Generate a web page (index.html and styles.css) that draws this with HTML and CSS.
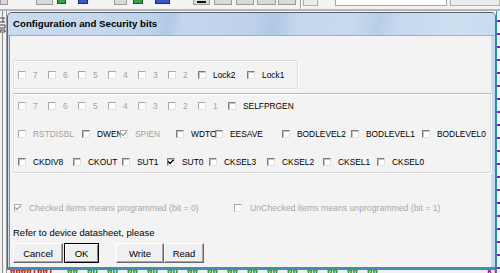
FILE: index.html
```html
<!DOCTYPE html>
<html>
<head>
<meta charset="utf-8">
<title>Configuration and Security bits</title>
<link rel="stylesheet" href="styles.css">
</head>
<body>
<div class="toolbar">
  <span class="tb t1"></span>
  <span class="tb t2"></span>
  <span class="tb t3 green"></span>
  <span class="tb t4 blue"></span>
  <span class="tb t5"></span>
  <span class="tb t6 green"></span>
  <span class="tb t7 blue"></span>
  <span class="tb t8"><i class="bar"></i></span>
  <span class="tb t9"></span>
  <span class="tb t10"></span>
  <span class="tb t11"></span>
  <span class="tb t12"></span>
  <span class="tdiv"></span>
  <span class="tb t13 light"></span>
  <span class="tb t14 field"></span>
  <span class="tb t15 light"></span>
</div>
<div class="desk">
  <div class="leftstrip">
    <svg class="appicon" width="6" height="16" viewBox="0 0 6 16">
      <path d="M0 1h5M3 1v4M0 5h5M0 8h5v3H0M0 13h5v2H0z" stroke="#444" stroke-width="1" fill="none"/>
    </svg>
  </div>
  <div class="rightstrip"></div>
</div>
<div class="hex">
  <span class="red">00001001</span>
  <span class="grn">00</span><span class="grn">0d</span><span class="grn">0b</span><span class="grn">00</span><span class="grn">0d</span><span class="grn">0b</span><span class="grn">00</span><span class="grn">00</span><span class="grn">00</span><span class="grn">00</span><span class="grn">00</span><span class="grn">00</span><span class="grn">00</span><span class="grn">00</span><span class="grn">00</span><span class="grn">00</span>
  <span class="pur">k1 1 0</span>
</div>

<div class="dialog">
  <div class="titlebar">Configuration and Security bits</div>
  <div class="body">
    <div class="group g1">
      <div class="row r1">
        <span class="cb dis"><i class="box"></i><span>7</span></span>
        <span class="cb dis"><i class="box"></i><span>6</span></span>
        <span class="cb dis"><i class="box"></i><span>5</span></span>
        <span class="cb dis"><i class="box"></i><span>4</span></span>
        <span class="cb dis"><i class="box"></i><span>3</span></span>
        <span class="cb dis"><i class="box"></i><span>2</span></span>
        <span class="cb"><i class="box"></i><span>Lock2</span></span>
        <span class="cb"><i class="box"></i><span>Lock1</span></span>
      </div>
    </div>
    <div class="group g2">
      <div class="row r2">
        <span class="cb dis"><i class="box"></i><span>7</span></span>
        <span class="cb dis"><i class="box"></i><span>6</span></span>
        <span class="cb dis"><i class="box"></i><span>5</span></span>
        <span class="cb dis"><i class="box"></i><span>4</span></span>
        <span class="cb dis"><i class="box"></i><span>3</span></span>
        <span class="cb dis"><i class="box"></i><span>2</span></span>
        <span class="cb dis"><i class="box"></i><span>1</span></span>
        <span class="cb"><i class="box"></i><span>SELFPRGEN</span></span>
      </div>
      <div class="row r3">
        <span class="cb dis"><i class="box"></i><span>RSTDISBL</span></span>
        <span class="cb"><i class="box"></i><span>DWEN</span></span>
        <span class="cb dis"><i class="box"><svg viewBox="0 0 8 8" width="8" height="8"><polyline points="1.3,3.6 3.1,5.5 6.6,1.8" fill="none" stroke="#a0a0a0" stroke-width="1.4"/></svg></i><span>SPIEN</span></span>
        <span class="cb"><i class="box"></i><span>WDTON</span></span>
        <span class="cb"><i class="box"></i><span>EESAVE</span></span>
        <span class="cb"><i class="box"></i><span>BODLEVEL2</span></span>
        <span class="cb"><i class="box"></i><span>BODLEVEL1</span></span>
        <span class="cb"><i class="box"></i><span>BODLEVEL0</span></span>
      </div>
      <div class="row r4">
        <span class="cb"><i class="box"></i><span>CKDIV8</span></span>
        <span class="cb"><i class="box"></i><span>CKOUT</span></span>
        <span class="cb"><i class="box"></i><span>SUT1</span></span>
        <span class="cb"><i class="box"><svg viewBox="0 0 8 8" width="8" height="8"><polyline points="1.3,3.6 3.1,5.5 6.6,1.8" fill="none" stroke="#000" stroke-width="1.4"/></svg></i><span>SUT0</span></span>
        <span class="cb"><i class="box"></i><span>CKSEL3</span></span>
        <span class="cb"><i class="box"></i><span>CKSEL2</span></span>
        <span class="cb"><i class="box"></i><span>CKSEL1</span></span>
        <span class="cb"><i class="box"></i><span>CKSEL0</span></span>
      </div>
    </div>
    <div class="legend">
      <span class="cb lg dis"><i class="box"><svg viewBox="0 0 8 8" width="8" height="8"><polyline points="1.3,3.6 3.1,5.5 6.6,1.8" fill="none" stroke="#a0a0a0" stroke-width="1.4"/></svg></i><span>Checked items means programmed (bit = 0)</span></span>
      <span class="cb lg dis"><i class="box"></i><span>UnChecked items means unprogrammed (bit = 1)</span></span>
    </div>
    <div class="refer">Refer to device datasheet, please</div>
    <div class="buttons">
      <button class="btn cancel">Cancel</button>
      <button class="btn ok">OK</button>
      <button class="btn write">Write</button>
      <button class="btn read">Read</button>
    </div>
  </div>
</div>
</body>
</html>
```
FILE: styles.css
```css
* { box-sizing: border-box; margin: 0; padding: 0; }
html, body { width: 500px; height: 273px; overflow: hidden; }
body {
  position: relative;
  background: #f0f0f0;
  font-family: "Liberation Sans", Arial, sans-serif;
  color: #000;
}

/* background application toolbar */
.toolbar {
  height: 11px;
  display: flex;
  align-items: flex-start;
  background: #f3f3f3;
  border-bottom: 2px solid #b4b4b4;
}
.tb {
  flex: none;
  height: 5px;
  background: #dadada;
  border: 1px solid #9c9c9c;
  border-top: none;
  position: relative;
}
.tb.green { height: 4px; background: #3d9a45; border-color: #1c5a22; }
.tb.blue { height: 4px; background: #3a55c8; border-color: #1b2a7d; }
.tb.light { background: #ececec; border-color: #b0b0b0; height: 6px; }
.tb.field { background: #fff; border-color: #a8a8a8; height: 6px; }
.bar { position: absolute; left: 3px; right: 3px; top: 1px; height: 2px; background: #111; }
.tdiv { flex: none; width: 2px; height: 9px; margin-left: 4px; border-left: 1px solid #a0a0a0; border-right: 1px solid #fff; }
.t1 { margin-left: 0; width: 8px; }
.t2 { margin-left: 28px; width: 17px; }
.t3 { margin-left: 4px; width: 9px; }
.t4 { margin-left: 12px; width: 10px; }
.t5 { margin-left: 26px; width: 13px; }
.t6 { margin-left: 6px; width: 10px; }
.t7 { margin-left: 12px; width: 15px; }
.t8 { margin-left: 23px; width: 17px; }
.t9 { margin-left: 4px; width: 18px; }
.t10 { margin-left: 4px; width: 18px; }
.t11 { margin-left: 3px; width: 19px; }
.t12 { margin-left: 2px; width: 18px; }
.t13 { margin-left: 1px; width: 15px; }
.t14 { margin-left: 17px; width: 112px; }
.t15 { margin-left: 3px; width: 50px; }

.desk {
  height: 262px;
  display: flex;
  justify-content: space-between;
}
.leftstrip {
  width: 7px;
  border-right: 1px solid #9a9a9a;
  padding-top: 6px;
  background: linear-gradient(90deg, #efefef 0 2px, #8d8d8d 2px 3px, #f2f2f2 3px);
}
.appicon { display: block; background: #f0f0f0; }
.rightstrip {
  width: 4px;
  border-left: 1px solid #2f8cb4;
  background: repeating-linear-gradient(180deg, #f4f4f4 0 9px, #8a2a8a 9px 11px, #f4f4f4 11px 13px);
}

/* hex text of the background window, partly covered by the dialog */
.hex {
  position: absolute;
  left: 10px;
  top: 267px;
  display: flex;
  font: bold 9px/10px "Liberation Mono", monospace;
  white-space: nowrap;
}
.hex .red { color: #b00000; width: 57px; }
.hex .grn { color: #128012; width: 20px; }
.hex .pur { color: #8a1a8a; margin-left: 100px; word-spacing: 6px; }

/* dialog window */
.dialog {
  position: absolute;
  left: 7px;
  top: 12px;
  width: 489px;
  height: 258px;
  display: flex;
  flex-direction: column;
  background: #c8daee;
  border: 1px solid #56626e;
  border-right-color: #3f7f9f;
  border-bottom: 3px solid #3d8fb7;
  border-radius: 5px 5px 0 0;
}
.titlebar {
  height: 23px;
  flex: none;
  padding-left: 5px;
  font-weight: bold;
  font-size: 9.7px;
  line-height: 22px;
  color: #000;
  border-bottom: 1px solid #9cb2c9;
  border-radius: 4px 4px 0 0;
  background: linear-gradient(100deg,
    #c9dbef 0%, #c5d8ee 18%, #bcd2eb 30%, #b2cae6 33%, #c3d7ed 36%,
    #bdd2ea 50%, #b0c8e5 55%, #c4d7ed 59%, #c8daef 70%, #b8cee8 76%,
    #c6d9ee 80%, #cddff1 92%, #c9dbef 100%);
}
.body {
  flex: 1;
  margin: 0 4px 0 1px;
  padding: 24px 0 0 3px;
  background: #f3f3f3;
  border-left: 1px solid #8e8e8e;
  display: flex;
  flex-direction: column;
  align-items: flex-start;
}

.group {
  border: 1px solid #dcdcdc;
  box-shadow: inset 1px 1px 0 #fff, 1px 1px 0 #fff;
}
.g1 { width: 285px; height: 29px; padding: 6px 0 0 4px; }
.g2 { width: 478px; height: 80px; margin-top: 4px; padding: 4px 0 0 4px; border-top-color: #b9b9b9; display: flex; flex-direction: column; gap: 12px; }

.row { display: grid; height: 16px; align-items: center; }
.r1 { grid-template-columns: repeat(6, 30px) 49px auto; }
.r2 { grid-template-columns: repeat(7, 30px) auto; }
.r3 { grid-template-columns: 64px 38px 56px 39px 67px 69px 71px auto; }
.r4 { grid-template-columns: 55px 49px 45px 42px 58px 56px 54px auto; }

.cb {
  display: flex;
  align-items: center;
  gap: 7px;
  height: 16px;
  font-size: 8.4px;
  white-space: nowrap;
  color: #000;
}
.cb.dis { color: #a2a2a2; }
.box {
  flex: none;
  position: relative;
  width: 8px;
  height: 8px;
  background: #fff;
  border-top: 1px solid #7c7c7c;
  border-left: 1px solid #7c7c7c;
  border-right: 1px solid #e2e2e2;
  border-bottom: 1px solid #e2e2e2;
  box-shadow: inset 1px 1px 0 #c4c4c4;
}
.box svg { position: absolute; left: -1px; top: -1px; display: block; }
.dis .box { border-color: #a8a8a8 #e4e4e4 #e4e4e4 #a8a8a8; box-shadow: none; }

.legend {
  display: flex;
  margin-top: 27px;
  padding-left: 1px;
}
.cb.lg { font-size: 8.7px; color: #a8a8a8; }
.legend .cb:first-child { width: 220px; }
.legend .cb:last-child { gap: 8px; }

.refer {
  margin-top: 9px;
  height: 16px;
  line-height: 16px;
  font-size: 9.5px;
  color: #000;
}
.buttons {
  margin-top: 2px;
  display: flex;
  height: 20px;
}
.btn {
  height: 20px;
  font-family: "Liberation Sans", Arial, sans-serif;
  font-size: 9.5px;
  color: #000;
  background: #f0f0f0;
  border: 1px solid;
  border-color: #fff #6a6a6a #6a6a6a #fff;
  box-shadow: inset -1px -1px 0 #a6a6a6;
}
.cancel { width: 50px; }
.ok { width: 35px; margin-left: 1px; border: 1px solid #000; box-shadow: inset 1px 1px 0 #fff, inset -1px -1px 0 #8a8a8a; }
.write { width: 48px; margin-left: 17px; }
.read { width: 40px; }
```
